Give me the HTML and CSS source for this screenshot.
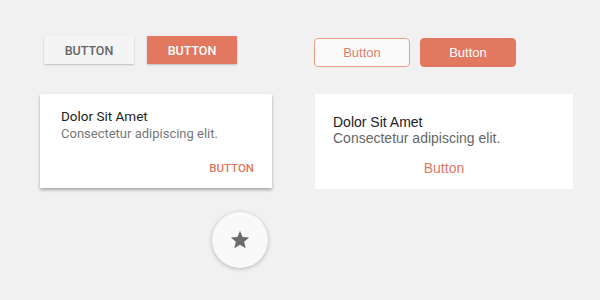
FILE: index.html
```html
<!DOCTYPE html>
<html>
<head>
<meta charset="utf-8">
<link rel="stylesheet" href="styles.css">
</head>
<body>
<div class="page">
  <section class="panel material">
    <div class="btn-row">
      <button class="m-btn m-flat">BUTTON</button>
      <button class="m-btn m-raised">BUTTON</button>
    </div>
    <div class="m-card">
      <div class="m-title">Dolor Sit Amet</div>
      <div class="m-sub">Consectetur adipiscing elit.</div>
      <div class="m-actions"><span class="m-action">BUTTON</span></div>
    </div>
    <div class="fab-wrap">
      <div class="fab">
        <svg width="22" height="22" viewBox="0 0 24 24"><path fill="#6b6b6b" d="M12 17.27L18.18 21l-1.64-7.03L22 9.24l-7.19-.61L12 2 9.19 8.63 2 9.24l5.46 4.73L5.82 21z"/></svg>
      </div>
    </div>
  </section>
  <section class="panel ios">
    <div class="btn-row ios-row">
      <button class="i-btn i-outline">Button</button>
      <button class="i-btn i-fill">Button</button>
    </div>
    <div class="i-card">
      <div class="i-title">Dolor Sit Amet</div>
      <div class="i-sub">Consectetur adipiscing elit.</div>
      <div class="i-action">Button</div>
    </div>
  </section>
</div>
</body>
</html>
```
FILE: styles.css
```css
html, body {
  margin: 0;
  padding: 0;
  background: #f1f1f1;
  width: 600px;
  height: 300px;
  overflow: hidden;
}
.page {
  display: flex;
  padding-left: 40px;
}
.panel.material {
  width: 232px;
  padding-top: 36px;
}
.panel.ios {
  width: 259px;
  margin-left: 42px;
  padding-top: 38px;
}
.btn-row {
  display: flex;
  gap: 13px;
  padding-left: 4px;
}
.ios-row {
  padding-left: 0;
  gap: 10px;
}
.m-btn {
  width: 90px;
  height: 28px;
  border: none;
  font-family: Roboto, sans-serif;
  font-weight: 500;
  font-size: 12.5px;
  padding: 0;
  box-shadow: 0 1px 2px rgba(0,0,0,0.22);
  border-radius: 1px;
}
.m-flat {
  background: #f4f4f4;
  color: #666;
}
.m-raised {
  background: #e27860;
  color: #fff;
}
.m-card {
  margin-top: 30px;
  height: 94px;
  box-sizing: border-box;
  background: #fff;
  box-shadow: 0 2px 3px rgba(0,0,0,0.3);
  padding: 13px 18px 0 21px;
  font-family: Roboto, sans-serif;
}
.m-title {
  font-size: 13.5px;
  color: #222;
  line-height: 18px;
}
.m-sub {
  font-size: 13px;
  color: #777;
  line-height: 18px;
}
.m-actions {
  display: flex;
  justify-content: flex-end;
  margin-top: 18px;
}
.m-action {
  font-size: 11.5px;
  font-weight: 500;
  color: #e27860;
}
.fab-wrap {
  padding-left: 172px;
  margin-top: 24px;
}
.fab {
  width: 56px;
  height: 56px;
  border-radius: 50%;
  background: #f9f9f9;
  box-shadow: 0 1px 4px rgba(0,0,0,0.25);
  display: flex;
  align-items: center;
  justify-content: center;
}
.i-btn {
  width: 96px;
  height: 29px;
  border-radius: 4px;
  font-family: "Liberation Sans", Arial, sans-serif;
  font-size: 13px;
  padding: 0;
}
.i-outline {
  background: #fafafa;
  border: 1px solid #eb9e8c;
  color: #e2806a;
}
.i-fill {
  background: #e27860;
  border: 1px solid #e27860;
  color: #fff;
}
.i-card {
  margin-top: 27px;
  margin-left: 1px;
  height: 95px;
  box-sizing: border-box;
  background: #fff;
  padding: 20px 18px 0 18px;
  font-family: "Liberation Sans", Arial, sans-serif;
}
.i-title {
  font-size: 14px;
  color: #222;
  line-height: 16px;
}
.i-sub {
  font-size: 14px;
  color: #666;
  line-height: 16px;
}
.i-action {
  text-align: center;
  margin-top: 14px;
  font-size: 14px;
  color: #e27860;
}
```
